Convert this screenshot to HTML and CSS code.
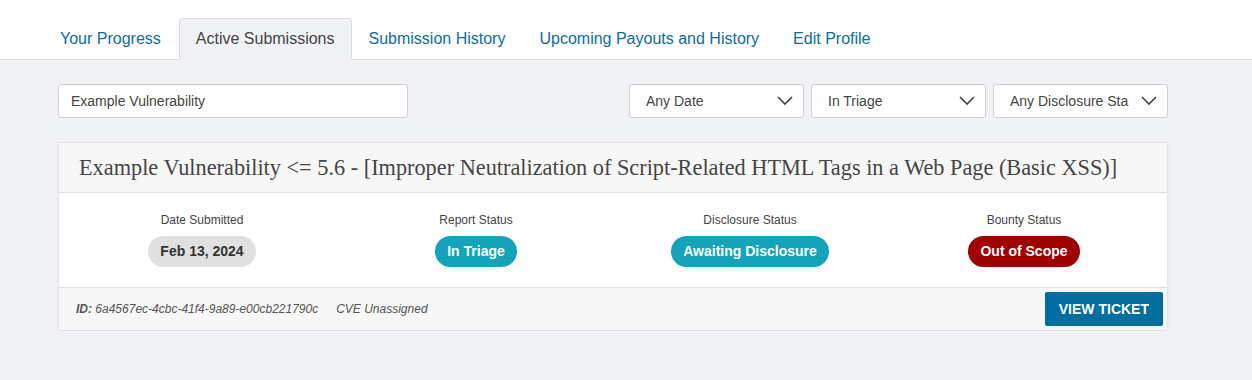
FILE: index.html
```html
<!DOCTYPE html>
<html lang="en">
<head>
    <meta charset="UTF-8">
    <title>Active Submissions</title>
    <link rel="stylesheet" href="styles.css">
</head>
<body>

    <nav class="tabs">
        <a class="tab" href="#">Your Progress</a>
        <a class="tab active" href="#">Active Submissions</a>
        <a class="tab" href="#">Submission History</a>
        <a class="tab" href="#">Upcoming Payouts and History</a>
        <a class="tab" href="#">Edit Profile</a>
    </nav>

    <main class="content">
        <!-- Filters -->
        <div class="filters">
            <input type="text" class="search" value="Example Vulnerability">
            <div class="selects">
                <div class="select"><span>Any Date</span><svg viewBox="0 0 16 10"><path d="M1 1l7 7 7-7"/></svg></div>
                <div class="select"><span>In Triage</span><svg viewBox="0 0 16 10"><path d="M1 1l7 7 7-7"/></svg></div>
                <div class="select"><span>Any Disclosure Sta</span><svg viewBox="0 0 16 10"><path d="M1 1l7 7 7-7"/></svg></div>
            </div>
        </div>

        <!-- Submission card -->
        <div class="card">
            <div class="card-header">Example Vulnerability &lt;= 5.6 - [Improper Neutralization of Script-Related HTML Tags in a Web Page (Basic XSS)]</div>
            <div class="card-body">
                <div class="stat">
                    <div class="label">Date Submitted</div>
                    <span class="pill grey">Feb 13, 2024</span>
                </div>
                <div class="stat">
                    <div class="label">Report Status</div>
                    <span class="pill teal">In Triage</span>
                </div>
                <div class="stat">
                    <div class="label">Disclosure Status</div>
                    <span class="pill teal">Awaiting Disclosure</span>
                </div>
                <div class="stat">
                    <div class="label">Bounty Status</div>
                    <span class="pill red">Out of Scope</span>
                </div>
            </div>
            <div class="card-footer">
                <div class="meta">
                    <span><b>ID:</b> 6a4567ec-4cbc-41f4-9a89-e00cb221790c</span>
                    <span>CVE Unassigned</span>
                </div>
                <a class="btn" href="#">View Ticket</a>
            </div>
        </div>
    </main>

</body>
</html>
```

FILE: styles.css
```css
body {
    font-family: 'Liberation Sans', Arial, sans-serif;
    background-color: #f1f2f6;
    margin: 0;
    padding: 0;
    color: #333;
}

.tabs {
    display: flex;
    align-items: flex-end;
    height: 59px;
    padding: 0 0 0 43px;
    background-color: #fff;
    border-bottom: 1px solid #dcdde2;
}

.tab {
    display: block;
    padding: 10px 16px 11px;
    margin-bottom: -1px;
    font-size: 16px;
    line-height: 19px;
    color: #0b6fa0;
    text-decoration: none;
    border: 1px solid transparent;
    border-radius: 4px 4px 0 0;
}

.tab:first-child {
    margin-right: 1px;
}

.tab.active {
    color: #444;
    background-color: #f1f2f6;
    border-color: #dcdde2;
    border-bottom-color: #f1f2f6;
}

.content {
    padding: 24px 84px 0 58px;
}

.filters {
    display: flex;
    justify-content: space-between;
    align-items: center;
}

.search {
    box-sizing: border-box;
    width: 350px;
    height: 34px;
    padding: 0 12px;
    border: 1px solid #cfd1d6;
    border-radius: 3px;
    font-family: inherit;
    font-size: 14px;
    color: #444;
    background: #fff;
}

.selects {
    display: flex;
    gap: 7px;
}

.select {
    box-sizing: border-box;
    width: 175px;
    height: 34px;
    display: flex;
    align-items: center;
    justify-content: space-between;
    padding: 0 10px 0 16px;
    border: 1px solid #cfd1d6;
    border-radius: 3px;
    background: #fff;
    font-size: 14px;
    color: #444;
    white-space: nowrap;
    overflow: hidden;
}

.select span {
    overflow: hidden;
    width: 122px;
}

.select svg {
    width: 16px;
    height: 10px;
    fill: none;
    stroke: #444;
    stroke-width: 1.6;
}

.card {
    margin-top: 24px;
    background: #fff;
    border: 1px solid #e2e3e7;
    border-radius: 3px;
    box-shadow: 0 1px 3px rgba(0, 0, 0, 0.06);
}

.card-header {
    padding: 12px 20px 11px;
    background: #f7f7f7;
    border-bottom: 1px solid #dedfe3;
    font-family: 'Liberation Serif', 'DejaVu Serif', serif;
    font-size: 22.3px;
    line-height: 26px;
    color: #454545;
}

.card-body {
    display: flex;
    padding: 20px 6px 20px;
}

.stat {
    flex: 1;
    text-align: center;
}

.label {
    font-size: 12px;
    color: #444;
    margin-bottom: 9px;
}

.pill {
    display: inline-block;
    padding: 0 12px;
    height: 31px;
    line-height: 31px;
    border-radius: 16px;
    font-size: 14px;
    font-weight: bold;
}

.pill.grey {
    background: #e0e0e0;
    color: #333;
}

.pill.teal {
    background: #13a4b9;
    color: #fff;
}

.pill.red {
    background: #a00000;
    color: #fff;
}

.card-footer {
    display: flex;
    justify-content: space-between;
    align-items: center;
    padding: 4px 4px 4px 17px;
    background: #f7f7f7;
    border-top: 1px solid #dedfe3;
}

.meta {
    display: flex;
    gap: 18px;
    font-size: 12px;
    font-style: italic;
    color: #555;
}

.btn {
    display: block;
    padding: 0 14px;
    height: 34px;
    line-height: 34px;
    background: #006e9e;
    color: #fff;
    font-size: 14px;
    font-weight: bold;
    text-transform: uppercase;
    text-decoration: none;
    border-radius: 2px;
}
```
